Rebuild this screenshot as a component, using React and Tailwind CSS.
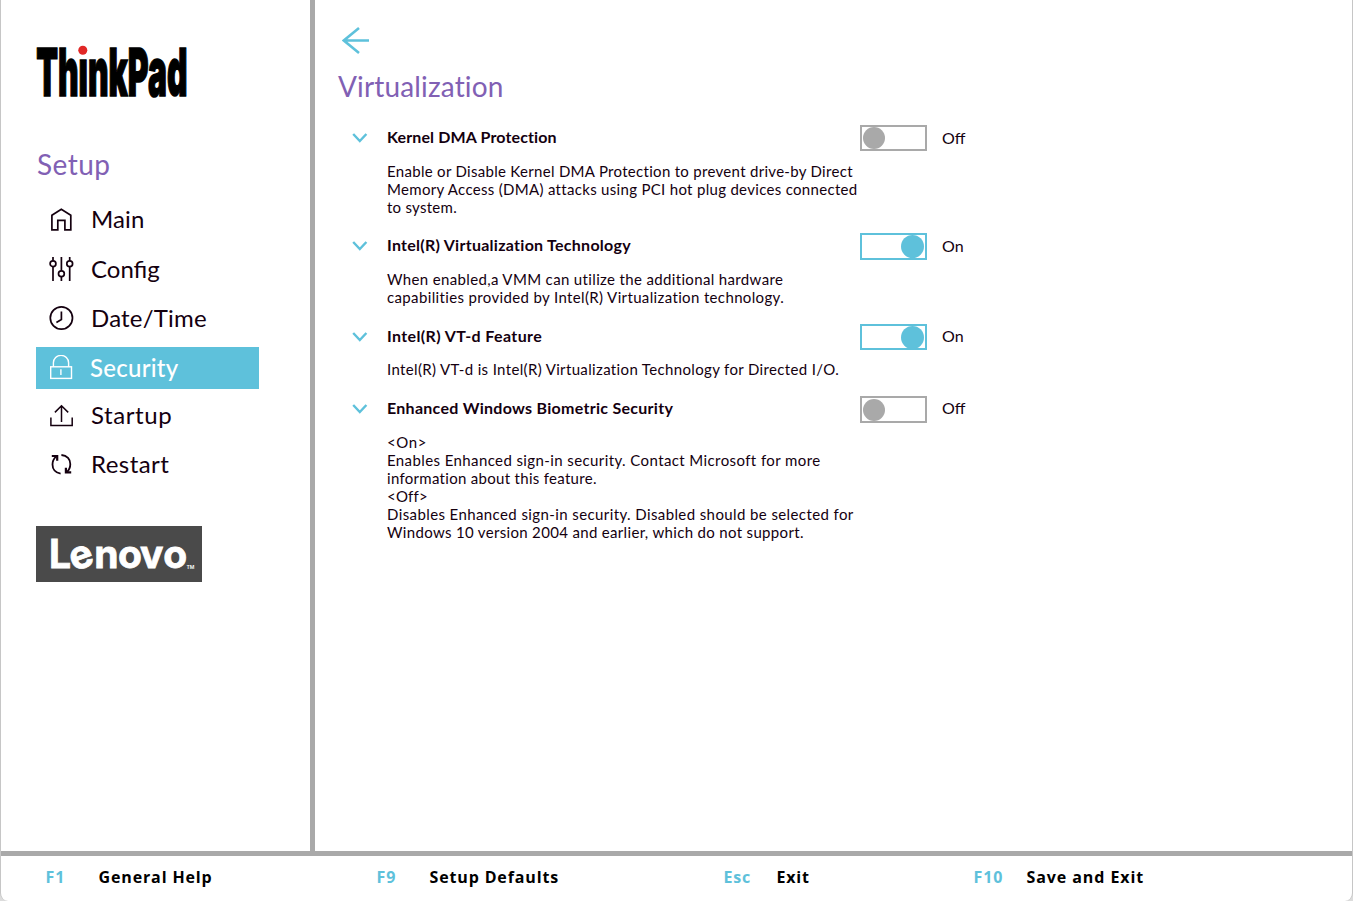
function HomeIcon() {
  return <path d="M2.9 8.3 12.3 2.2 21.8 8.3V22.9H15.9V13.3H8.8V22.9H2.9Z" />;
}

function SlidersIcon() {
  return (
    <>
      <path d="M4 0V3.6M4 9.8V24M12.4 0V13.6M12.4 19.8V24M20.7 0V3.6M20.7 9.8V24" />
      <circle cx="4" cy="6.7" r="2.9" />
      <circle cx="12.4" cy="16.7" r="2.9" />
      <circle cx="20.7" cy="6.7" r="2.9" />
    </>
  );
}

function ClockIcon() {
  return (
    <>
      <circle cx="12.4" cy="12" r="11.1" />
      <path d="M12.4 5.5V13.6L7.4 16.4" />
    </>
  );
}

function LockIcon() {
  return (
    <g strokeWidth="1.4">
      <rect x="1.7" y="11.8" width="20.8" height="11.6" />
      <path d="M4.4 11.8V7.8a7.6 7.4 0 0 1 15.2 0V11.8M11.9 14.2V20" />
    </g>
  );
}

function UploadIcon() {
  return <path strokeWidth="1.5" d="M1.9 14.5V22.4H23.2V14.5M12.5 19V3M5.9 9.4 12.5 2.8 19.2 9.4" />;
}

function RestartIcon() {
  return (
    <g strokeWidth="1.8">
      <path d="M11.6 21.6C6.2 20.9 3.5 17 3.5 12.6 3.5 9 5 6.3 7.4 4.4" />
      <path d="M12.4 3C18.2 3.4 21.3 7.5 21.3 12 21.3 15.3 19.9 18.2 17.9 20" />
      <path strokeWidth="2.2" d="M2.8 4H8.2V8.8M22.2 20.4H16.9V15.8" />
    </g>
  );
}

const nav = [
  { label: "Main", icon: HomeIcon, cls: "", text: "pl-4 pb-[2px] tracking-[0.1px]" },
  { label: "Config", icon: SlidersIcon, cls: "mt-2", text: "pl-4 pb-[2px]" },
  { label: "Date/Time", icon: ClockIcon, cls: "mt-[7px]", text: "pl-4 pb-[2px] tracking-[0.2px]" },
  { label: "Security", icon: LockIcon, cls: "mt-[7px] bg-[#5ec1db] text-white", text: "pl-[15px] tracking-[0.26px] font-medium" },
  { label: "Startup", icon: UploadIcon, cls: "mt-[6px]", text: "pl-4 pb-[2px] tracking-[0.58px]" },
  { label: "Restart", icon: RestartIcon, cls: "mt-[7px]", text: "pl-4 pb-[2px] tracking-[0.45px]" },
];

const settings = [
  {
    title: "Kernel DMA Protection",
    titleCls: "tracking-[0.13px]",
    on: false,
    rowCls: "h-[108px]",
    toggleCls: "h-[26px]",
    stateCls: "leading-[26px]",
    bodyCls: "mt-[10px]",
    lines: [
      ["Enable or Disable Kernel DMA Protection to prevent drive-by Direct", "tracking-[0.3px]"],
      ["Memory Access (DMA) attacks using PCI hot plug devices connected", "tracking-[0.31px]"],
      ["to system.", "tracking-[0.27px]"],
    ],
  },
  {
    title: "Intel(R) Virtualization Technology",
    titleCls: "tracking-[0.27px]",
    on: true,
    rowCls: "h-[91px]",
    toggleCls: "h-[27px]",
    stateCls: "leading-[26px]",
    bodyCls: "mt-[10px]",
    lines: [
      ["When enabled,a VMM can utilize the additional hardware", "tracking-[0.35px]"],
      ["capabilities provided by Intel(R) Virtualization technology.", "tracking-[0.36px]"],
    ],
  },
  {
    title: "Intel(R) VT-d Feature",
    titleCls: "tracking-[0.38px]",
    on: true,
    rowCls: "h-[72px]",
    toggleCls: "h-[26px]",
    stateCls: "leading-[24px]",
    bodyCls: "mt-[9px]",
    lines: [["Intel(R) VT-d is Intel(R) Virtualization Technology for Directed I/O.", "tracking-[0.35px]"]],
  },
  {
    title: "Enhanced Windows Biometric Security",
    titleCls: "tracking-[0.28px]",
    on: false,
    rowCls: "",
    toggleCls: "h-[27px]",
    stateCls: "leading-[24px]",
    bodyCls: "mt-[10px]",
    lines: [
      ["<On>", "tracking-[0.6px]"],
      ["Enables Enhanced sign-in security. Contact Microsoft for more", "tracking-[0.4px]"],
      ["information about this feature.", "tracking-[0.3px]"],
      ["<Off>", "tracking-[0.2px]"],
      ["Disables Enhanced sign-in security. Disabled should be selected for", "tracking-[0.4px]"],
      ["Windows 10 version 2004 and earlier, which do not support.", "tracking-[0.33px]"],
    ],
  },
];

const keys = [
  { k: "F1", label: "General Help", cls: "w-[331px]", t: "tracking-[0.87px]" },
  { k: "F9", label: "Setup Defaults", cls: "w-[347px]", t: "tracking-[0.86px]" },
  { k: "Esc", label: "Exit", cls: "w-[250px]", t: "tracking-[0.82px]" },
  { k: "F10", label: "Save and Exit", cls: "", t: "tracking-[0.92px]" },
];

function ThinkPadLogo() {
  return (
    <svg width="160" height="72" viewBox="0 0 160 72" className="block overflow-visible">
      <text
        transform="translate(-0.8 52.2) scale(0.4775 1)"
        x="0"
        y="0"
        fontFamily="Inter, sans-serif"
        fontWeight="900"
        fontSize="66.5"
        fill="#000"
        stroke="#000"
        strokeWidth="1.6"
      >
        ThinkPad
      </text>
      <rect x="41" y="-5" width="10.5" height="18" fill="#fff" />
      <circle cx="45.8" cy="6.3" r="4.5" fill="#e12726" />
    </svg>
  );
}

function LenovoLogo() {
  return (
    <div className="flex h-14 w-[166px] bg-[#4a4a4a]">
      <svg width="166" height="56" viewBox="0 0 166 56" className="block">
        <text
          x="13 38 58.3 82 104 127.3"
          y="42 45.5 42 42 42 42"
          rotate="0 -20 0 0 0 0"
          fontFamily="Inter, sans-serif"
          fontWeight="700"
          fontSize="39"
          fill="#fff"
          stroke="#fff"
          strokeWidth="0.8"
        >
          Lenovo
        </text>
        <text x="150.5" y="43" fontFamily="Inter, sans-serif" fontWeight="600" fontSize="5" fill="#fff">
          TM
        </text>
      </svg>
    </div>
  );
}

function Toggle({ on, cls }) {
  return (
    <span
      className={
        (on
          ? "flex w-[67px] items-center justify-end border-2 border-[#5ec1db] pr-px "
          : "flex w-[67px] items-center justify-start border-2 border-[#a9a9a9] pl-px ") + cls
      }
    >
      <span className={on ? "size-[23px] shrink-0 rounded-full bg-[#5ec1db]" : "size-[22px] shrink-0 rounded-full bg-[#a9a9a9]"} />
    </span>
  );
}

function Setting({ item }) {
  return (
    <section className={item.rowCls}>
      <div className="flex h-[27px] items-start">
        <svg width="16" height="12" viewBox="0 0 16 12" className="mt-[7px] ml-[14px]" fill="none" stroke="#5ec1db" strokeWidth="2.4">
          <path d="M1.2 2 7.8 9 14.4 2" />
        </svg>
        <h2 className={"ml-[19px] w-[473px] text-[16px] leading-[23px] font-bold whitespace-nowrap " + item.titleCls}>{item.title}</h2>
        <Toggle on={item.on} cls={item.toggleCls} />
        <span className={"ml-[15px] text-[16px] " + item.stateCls}>{item.on ? "On" : "Off"}</span>
      </div>
      <div className={"ml-12 pl-px text-[15px] leading-[18px] " + item.bodyCls}>
        {item.lines.map(([text, cls]) => (
          <p key={text} className={"whitespace-nowrap " + cls}>
            {text}
          </p>
        ))}
      </div>
    </section>
  );
}

export default function App() {
  return (
    <div className="h-[901px] w-[1353px] bg-[#dcdcdc] font-['Lato',sans-serif] text-[#14000f]">
      <div className="flex h-full flex-col overflow-hidden rounded-b-lg border-x border-[#c6c6c6] bg-white">
        <div className="flex h-[851px]">
          <aside className="w-[314px] border-r-[5px] border-[#a9a9a9] pl-[35px]">
            <div className="pt-11 pl-px">
              <ThinkPadLogo />
            </div>
            <h2 className="mt-7 h-10 pl-px text-[28px] leading-10 tracking-[0.45px] text-[#8160b4]">Setup</h2>
            <nav className="mt-[15px] w-[223px]">
              {nav.map(({ label, icon: Icon, cls, text }) => (
                <div key={label} className={"flex h-[42px] items-center pl-[13px] text-[24px] leading-[42px] " + cls}>
                  <svg width="26" height="26" viewBox="0 0 26 26" fill="none" stroke="currentColor" strokeWidth="1.7">
                    <Icon />
                  </svg>
                  <span className={text}>{label}</span>
                </div>
              ))}
            </nav>
            <div className="mt-10">
              <LenovoLogo />
            </div>
          </aside>
          <main className="flex-1 pl-[23px]">
            <svg width="28" height="28" viewBox="0 0 28 28" className="mt-[27px] ml-1 block" fill="none" stroke="#5ec1db" strokeWidth="2.6">
              <path d="M27 13.5H1.8M17 1 1.8 13.5 17 26" />
            </svg>
            <h1 className="mt-[11px] h-10 text-[28px] leading-10 tracking-[0.15px] text-[#8160b4]">Virtualization</h1>
            <div className="mt-[19px]">
              {settings.map((s) => (
                <Setting key={s.title} item={s} />
              ))}
            </div>
          </main>
        </div>
        <footer className="flex h-[50px] items-center border-t-[5px] border-[#a9a9a9] pb-[3px] pl-[44.5px] font-['Open_Sans',sans-serif] text-[16px] font-bold">
          {keys.map(({ k, label, cls, t }) => (
            <div key={k} className={"flex " + cls + " " + t}>
              <span className="w-[53px] text-[#5ec1db]">{k}</span>
              <span className="text-black">{label}</span>
            </div>
          ))}
        </footer>
      </div>
    </div>
  );
}
